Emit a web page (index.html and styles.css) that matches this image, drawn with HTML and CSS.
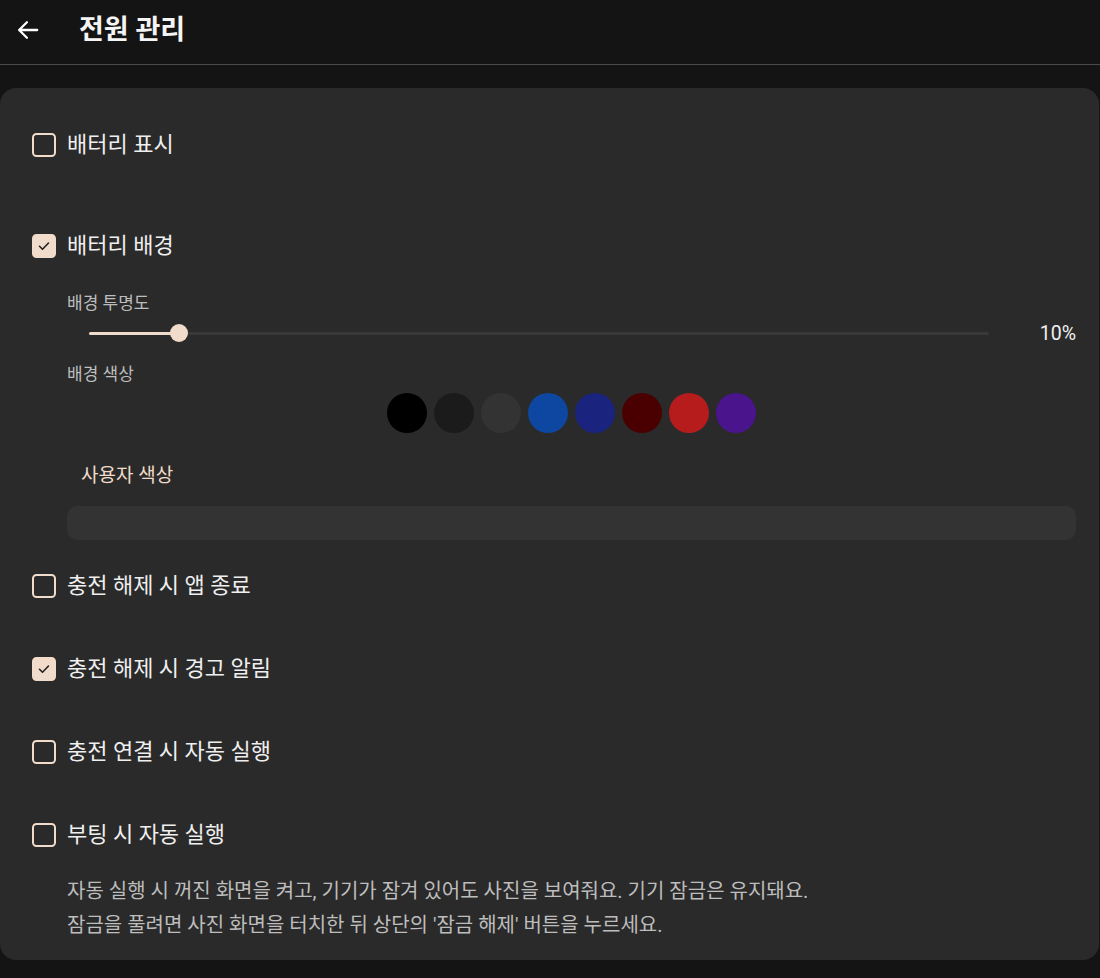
FILE: index.html
```html
<!DOCTYPE html>
<html lang="ko">
<head>
<meta charset="utf-8">
<title>전원 관리</title>
<link rel="stylesheet" href="styles.css">
</head>
<body>
<header class="topbar">
  <button class="back" aria-label="뒤로">
    <svg width="26" height="26" viewBox="0 0 24 24"><path d="M20.5 12H4M11 4.8L3.8 12l7.2 7.2" fill="none" stroke="#fff" stroke-width="2.1" stroke-linecap="round" stroke-linejoin="round"/></svg>
  </button>
  <h1 class="title">전원 관리</h1>
</header>
<main class="card">
  <label class="row first"><span class="box"></span><span class="label">배터리 표시</span></label>
  <label class="row gap-big"><span class="box checked"><svg width="14" height="14" viewBox="0 0 14 14"><path d="M2.5 7.3l3 3 6-6.3" fill="none" stroke="#222" stroke-width="1.6" stroke-linecap="round" stroke-linejoin="round"/></svg></span><span class="label">배터리 배경</span></label>
  <section class="sub">
    <div class="sublabel">배경 투명도</div>
    <div class="slider-row">
      <div class="track"><div class="fill" style="width:10%"></div><div class="thumb" style="left:10%"></div></div>
      <div class="value">10%</div>
    </div>
    <div class="sublabel l2">배경 색상</div>
    <div class="swatches">
      <span class="sw c1"></span><span class="sw c2"></span><span class="sw c3"></span><span class="sw c4"></span><span class="sw c5"></span><span class="sw c6"></span><span class="sw c7"></span><span class="sw c8"></span>
    </div>
    <button class="custom">사용자 색상</button>
    <div class="input"></div>
  </section>
  <label class="row r3"><span class="box"></span><span class="label">충전 해제 시 앱 종료</span></label>
  <label class="row r4"><span class="box checked"><svg width="14" height="14" viewBox="0 0 14 14"><path d="M2.5 7.3l3 3 6-6.3" fill="none" stroke="#222" stroke-width="1.6" stroke-linecap="round" stroke-linejoin="round"/></svg></span><span class="label">충전 해제 시 경고 알림</span></label>
  <label class="row r4"><span class="box"></span><span class="label">충전 연결 시 자동 실행</span></label>
  <label class="row r4"><span class="box"></span><span class="label">부팅 시 자동 실행</span></label>
  <p class="help">자동 실행 시 꺼진 화면을 켜고, 기기가 잠겨 있어도 사진을 보여줘요. 기기 잠금은 유지돼요.<br>잠금을 풀려면 사진 화면을 터치한 뒤 상단의 '잠금 해제' 버튼을 누르세요.</p>
</main>
</body>
</html>
```
FILE: styles.css
```css
* { box-sizing: border-box; }
html, body { margin: 0; padding: 0; }
body {
  background: #141414;
  color: #ececec;
  font-family: Roboto, "Noto Sans CJK KR", "Noto Sans", sans-serif;
  width: 1100px;
  height: 978px;
  overflow: hidden;
}
.topbar {
  height: 65px;
  display: flex;
  align-items: center;
  border-bottom: 1px solid #4a4a4a;
  padding: 0 0 5px 15px;
}
.back {
  background: none;
  border: 0;
  padding: 0;
  width: 26px;
  height: 26px;
  display: flex;
}
.title {
  margin: 0 0 0 38px;
  font-size: 27px;
  font-weight: 700;
  color: #f4f4f4;
  line-height: 32px;
}
.card {
  margin: 23px 1px 0 0;
  background: #2a2a2a;
  border-radius: 16px;
  padding: 0 23px 0 32px;
  height: 872px;
  display: flex;
  flex-direction: column;
}
.row {
  display: flex;
  align-items: center;
  height: 24px;
  gap: 11px;
}
.row.first { margin-top: 45px; }
.row.gap-big { margin-top: 77px; }
.row.r3 { margin-top: 34px; }
.row.r4 { margin-top: 59px; }
.box {
  width: 24px;
  height: 24px;
  border: 2.5px solid #f1dccb;
  border-radius: 4.5px;
  display: flex;
  align-items: center;
  justify-content: center;
  flex: none;
}
.box.checked { background: #f1dccb; }
.label {
  font-size: 22px;
  color: #efefef;
  line-height: 24px;
}
.sub {
  padding-left: 35px;
  display: flex;
  flex-direction: column;
}
.sublabel {
  font-size: 17px;
  color: #bdbdbd;
  margin-top: 34px;
  line-height: 22px;
}
.sublabel.l2 { margin-top: 18px; }
.slider-row {
  display: flex;
  align-items: center;
  height: 24px;
  margin-top: 7px;
  padding-left: 22px;
}
.track {
  position: relative;
  width: 900px;
  height: 3px;
  background: #383838;
  border-radius: 2px;
}
.fill {
  height: 3px;
  background: #f1dccb;
  border-radius: 2px;
}
.thumb {
  position: absolute;
  top: -7.5px;
  width: 18px;
  height: 18px;
  margin-left: -9px;
  border-radius: 50%;
  background: #f1dccb;
}
.value {
  margin-left: auto;
  font-size: 19.5px;
  color: #efefef;
}
.swatches {
  display: flex;
  justify-content: center;
  gap: 7px;
  margin-top: 8px;
}
.sw {
  width: 40px;
  height: 40px;
  border-radius: 50%;
}
.c1 { background: #000000; }
.c2 { background: #1b1b1b; }
.c3 { background: #333333; }
.c4 { background: #0d47a1; }
.c5 { background: #1a237e; }
.c6 { background: #4a0000; }
.c7 { background: #b71c1c; }
.c8 { background: #4a148c; }
.custom {
  align-self: flex-start;
  background: none;
  border: 0;
  padding: 0 14px;
  margin-top: 21px;
  height: 38px;
  font-family: inherit;
  font-size: 19px;
  color: #f1dccb;
}
.input {
  margin-top: 14px;
  height: 34px;
  flex: none;
  background: #333333;
  border-radius: 10px;
}
.help {
  margin: 27px 0 0 35px;
  font-size: 20px;
  line-height: 34px;
  color: #bdbdbd;
}
```
